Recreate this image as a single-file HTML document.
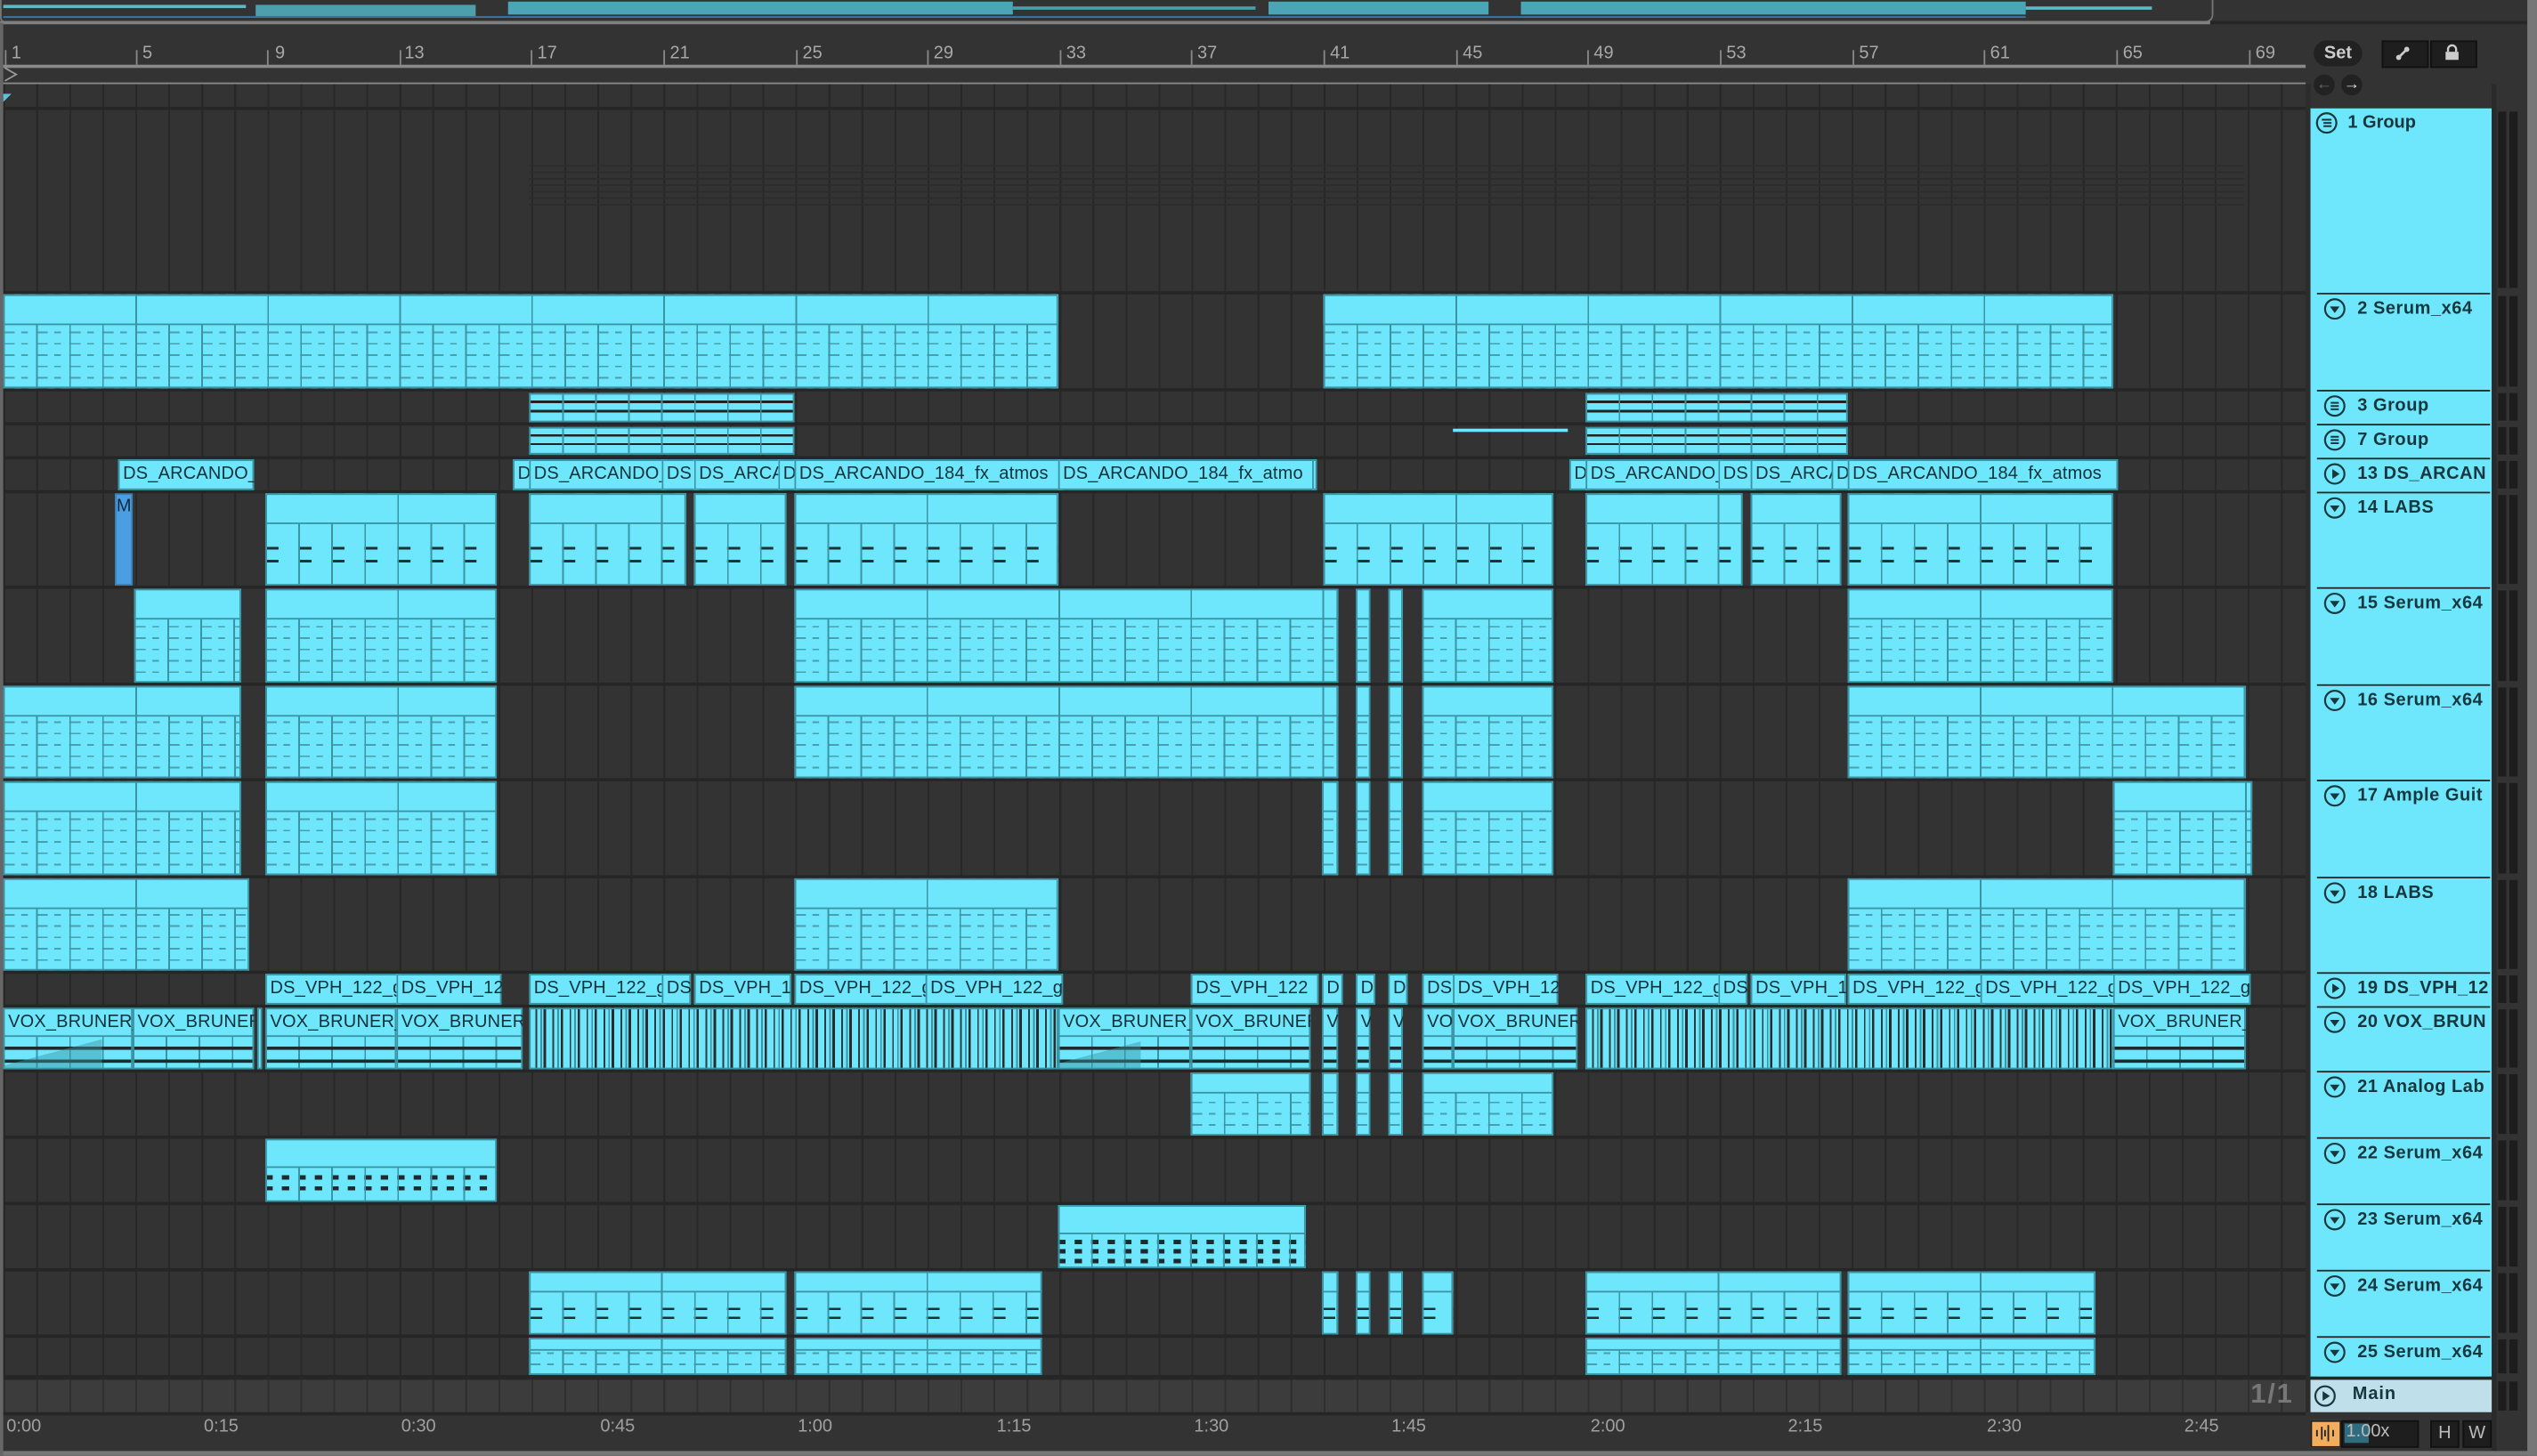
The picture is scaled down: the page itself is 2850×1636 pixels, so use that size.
<!DOCTYPE html>
<html><head><meta charset="utf-8">
<style>
html,body{margin:0;padding:0;background:#2b2b2b;width:2850px;height:1636px;overflow:hidden}
#w{position:absolute;left:0;top:0;width:1568px;height:900px;transform:scale(1.81760);transform-origin:0 0;background:#333;font-family:"Liberation Sans",sans-serif}
.abs{position:absolute}
#arr{position:absolute;left:0;top:52px;width:1425px;height:821px;background:
 repeating-linear-gradient(90deg,transparent 0 2px,#282828 2px 3.2px,transparent 3.2px 20.4px),#333}
.sep{position:absolute;left:0;width:1425px;height:2px;background:#262626}
.c{position:absolute;background-color:#6ee6fb;box-shadow:inset 0 0 0 1px #3a94a3;overflow:hidden}
.m{background:
 linear-gradient(#3a94a3,#3a94a3) 0 32%/100% 1px no-repeat,
 repeating-linear-gradient(90deg,#3a94a3 0 1px,transparent 1px 81.6px),
 linear-gradient(to bottom,#6ee6fb 0 32%,transparent 32%),
 repeating-linear-gradient(90deg,#3a94a3 0 1px,transparent 1px 20.4px),
 linear-gradient(90deg,transparent 0 35%,#6ee6fb 35% 55%,transparent 55% 75%,#6ee6fb 75%) 0 0/20.4px 100%,
 repeating-linear-gradient(0deg,transparent 0 6px,#4a9fae 6px 7px),
 #6ee6fb}
.m2{background:
 linear-gradient(#3a94a3,#3a94a3) 0 32%/100% 1px no-repeat,
 repeating-linear-gradient(90deg,#3a94a3 0 1px,transparent 1px 81.6px),
 linear-gradient(to bottom,#6ee6fb 0 32%,transparent 32%),
 repeating-linear-gradient(90deg,#3a94a3 0 1px,transparent 1px 20.4px),
 linear-gradient(90deg,transparent 0 40%,#6ee6fb 40%) 0 0/20.4px 100%,
 linear-gradient(to bottom,transparent 0 58%,#1e3236 58% 61%,transparent 61% 72%,#1e3236 72% 75%,transparent 75%),
 #6ee6fb}
.g{background:repeating-linear-gradient(90deg,#3a94a3 0 1px,transparent 1px 20.4px),
 linear-gradient(to bottom,transparent 0 26%,#222 26% 34%,transparent 34% 58%,#222 58% 66%,transparent 66%),#6ee6fb}
.a{background:
 linear-gradient(#3a94a3,#3a94a3) 0 17px/100% 1px no-repeat,
 linear-gradient(#1e2a2d,#1e2a2d) 0 24px/100% 2px no-repeat,
 linear-gradient(#1e2a2d,#1e2a2d) 0 32px/100% 2px no-repeat,
 repeating-linear-gradient(90deg,#3a94a3 0 1px,transparent 1px 20.4px) 0 18px/100% 100% no-repeat,
 #6ee6fb}
.st{background:
 repeating-linear-gradient(90deg,#6ee6fb 0 4px,#2f3b3e 4px 5px,#6ee6fb 5px 7px,#3a94a3 7px 8px,#6ee6fb 8px 9px,#2b2b2b 9px 10.5px),
 #6ee6fb}
.l{font-size:11px;line-height:19px;color:#10323a;padding-left:3px;white-space:nowrap;letter-spacing:.1px}
.r{position:absolute;color:#a8a8a8;font-size:11px;top:27px}
.tk{position:absolute;top:35px;width:1px;height:5px;background:#888}
.hd{position:absolute;left:1432px;width:107px;background:#6ee6fb;border-top:1px solid #262626;color:#17373e;font-weight:bold;font-size:11px}
.hd span{position:absolute;left:25px;top:3px;white-space:nowrap;letter-spacing:.3px}
.hd svg{position:absolute;left:4px;top:2px}
.mt{position:absolute;left:1544px;width:12px;background:
 linear-gradient(90deg,#1d1d1d 0 5px,transparent 5px 7px,#1d1d1d 7px 12px)}
.tl{position:absolute;top:876px;color:#a0a0a0;font-size:11px}
</style></head><body><div id="w">
<div class="abs" style="left:0;top:0;width:1366px;height:13px;background:#333;border:1px solid #777;border-top:0;border-radius:0 0 5px 3px"></div>
<div class="abs" style="left:2px;top:3px;width:150px;height:2px;background:#5fb8c8"></div>
<div class="abs" style="left:158px;top:3px;width:136px;height:7px;background:#4d9fad"></div>
<div class="abs" style="left:314px;top:1px;width:312px;height:8px;background:#4aa5b6"></div>
<div class="abs" style="left:626px;top:4px;width:150px;height:2px;background:#4d9fad"></div>
<div class="abs" style="left:784px;top:1px;width:136px;height:8px;background:#4aa5b6"></div>
<div class="abs" style="left:940px;top:1px;width:312px;height:8px;background:#4aa5b6"></div>
<div class="abs" style="left:1252px;top:4px;width:78px;height:2px;background:#5fb8c8"></div>
<div class="abs" style="left:2px;top:10px;width:1250px;height:1px;background:#3c78a8"></div>
<div class="abs" style="left:1366px;top:13px;width:202px;height:2px;background:#262626"></div>
<div class="abs" style="left:0;top:13px;width:1366px;height:2px;background:#808080"></div>
<div class="r" style="left:7px">1</div><div class="tk" style="left:3px;top:31px;height:9px"></div>
<div class="r" style="left:88px">5</div><div class="tk" style="left:84px;top:31px;height:9px"></div>
<div class="r" style="left:170px">9</div><div class="tk" style="left:165px;top:31px;height:9px"></div>
<div class="r" style="left:250px">13</div><div class="tk" style="left:247px;top:31px;height:9px"></div>
<div class="r" style="left:332px">17</div><div class="tk" style="left:328px;top:31px;height:9px"></div>
<div class="r" style="left:414px">21</div><div class="tk" style="left:410px;top:31px;height:9px"></div>
<div class="r" style="left:496px">25</div><div class="tk" style="left:492px;top:31px;height:9px"></div>
<div class="r" style="left:577px">29</div><div class="tk" style="left:573px;top:31px;height:9px"></div>
<div class="r" style="left:659px">33</div><div class="tk" style="left:655px;top:31px;height:9px"></div>
<div class="r" style="left:740px">37</div><div class="tk" style="left:736px;top:31px;height:9px"></div>
<div class="r" style="left:822px">41</div><div class="tk" style="left:818px;top:31px;height:9px"></div>
<div class="r" style="left:904px">45</div><div class="tk" style="left:900px;top:31px;height:9px"></div>
<div class="r" style="left:985px">49</div><div class="tk" style="left:981px;top:31px;height:9px"></div>
<div class="r" style="left:1067px">53</div><div class="tk" style="left:1063px;top:31px;height:9px"></div>
<div class="r" style="left:1149px">57</div><div class="tk" style="left:1145px;top:31px;height:9px"></div>
<div class="r" style="left:1230px">61</div><div class="tk" style="left:1226px;top:31px;height:9px"></div>
<div class="r" style="left:1312px">65</div><div class="tk" style="left:1308px;top:31px;height:9px"></div>
<div class="r" style="left:1394px">69</div><div class="tk" style="left:1390px;top:31px;height:9px"></div>
<div class="abs" style="left:0;top:40px;width:1425px;height:1.5px;background:#8a8a8a"></div>
<div class="abs" style="left:0;top:51px;width:1425px;height:1.5px;background:#8a8a8a"></div>
<svg class="abs" style="left:2px;top:41px" width="10" height="10"><path d="M1 1 L8 5 L1 9" fill="none" stroke="#999" stroke-width="1"/></svg>
<div class="abs" style="left:1430px;top:25px;width:30px;height:16px;border-radius:8px;background:#222;color:#ccc;font-size:11px;font-weight:bold;text-align:center;line-height:16px">Set</div>
<div class="abs" style="left:1472px;top:25px;width:27px;height:15px;background:#1e1e1e;border:1px solid #111"></div>
<svg class="abs" style="left:1480px;top:28px" width="10" height="10"><path d="M2 8 L8 2" stroke="#ccc" stroke-width="1.5"/><circle cx="2.5" cy="7.5" r="1.6" fill="#ccc"/><circle cx="7.5" cy="2.5" r="1.6" fill="#ccc"/></svg>
<div class="abs" style="left:1502px;top:25px;width:27px;height:15px;background:#1e1e1e;border:1px solid #111"></div>
<svg class="abs" style="left:1510px;top:27px" width="11" height="11"><path d="M3 5 V3.5 a2.5 2.5 0 0 1 5 0 V5" fill="none" stroke="#ccc" stroke-width="1.3"/><rect x="1.5" y="5" width="8" height="5" fill="#ccc"/></svg>
<div class="abs" style="left:1430px;top:46px;width:13px;height:13px;border-radius:50%;background:#222;color:#666;font-size:10px;text-align:center;line-height:13px">&#8592;</div>
<div class="abs" style="left:1447px;top:46px;width:13px;height:13px;border-radius:50%;background:#222;color:#ddd;font-size:10px;text-align:center;line-height:13px">&#8594;</div>
<div id="arr"></div>
<div class="abs" style="left:2px;top:58px;width:5px;height:5px;background:linear-gradient(135deg,#5fc0d8 50%,transparent 50%)"></div>
<div class="sep" style="top:66px"></div>
<div class="sep" style="top:180px"></div>
<div class="sep" style="top:240px"></div>
<div class="sep" style="top:261px"></div>
<div class="sep" style="top:282px"></div>
<div class="sep" style="top:303px"></div>
<div class="sep" style="top:362px"></div>
<div class="sep" style="top:422px"></div>
<div class="sep" style="top:481px"></div>
<div class="sep" style="top:541px"></div>
<div class="sep" style="top:600px"></div>
<div class="sep" style="top:621px"></div>
<div class="sep" style="top:661px"></div>
<div class="sep" style="top:702px"></div>
<div class="sep" style="top:743px"></div>
<div class="sep" style="top:784px"></div>
<div class="sep" style="top:825px"></div>
<div class="sep" style="top:850px;height:3px"></div>
<div class="abs" style="left:0;top:853px;width:1425px;height:20px;background:repeating-linear-gradient(90deg,transparent 0 2px,#2f2f2f 2px 3.2px,transparent 3.2px 20.4px),#3c3c3c"></div>
<div class="abs" style="left:0;top:873px;width:1425px;height:2px;background:#262626"></div>
<div class="abs" style="left:327px;top:100px;width:1060px;height:30px;background:repeating-linear-gradient(0deg,transparent 0 3px,#2c2c2c 3px 4px)"></div>
<div class="c m" style="left:2px;top:182px;width:652px;height:58px"></div>
<div class="c m" style="left:818px;top:182px;width:488px;height:58px"></div>
<div class="c g" style="left:327px;top:243px;width:164px;height:18px"></div>
<div class="c g" style="left:980px;top:243px;width:162px;height:18px"></div>
<div class="c g" style="left:327px;top:264px;width:164px;height:17px"></div>
<div class="c g" style="left:980px;top:264px;width:162px;height:17px"></div>
<div class="abs" style="left:898px;top:265px;width:71px;height:2px;background:#6ee6fb"></div>
<div class="c l" style="left:73px;top:284px;width:81px;height:19px">DS_ARCANDO_</div>
<div class="c l" style="left:317px;top:284px;width:10px;height:19px">D</div>
<div class="c l" style="left:327px;top:284px;width:82px;height:19px">DS_ARCANDO_</div>
<div class="c l" style="left:409px;top:284px;width:20px;height:19px">DS</div>
<div class="c l" style="left:429px;top:284px;width:52px;height:19px">DS_ARCA</div>
<div class="c l" style="left:481px;top:284px;width:10px;height:19px">D</div>
<div class="c l" style="left:491px;top:284px;width:163px;height:19px">DS_ARCANDO_184_fx_atmos</div>
<div class="c l" style="left:654px;top:284px;width:156px;height:19px">DS_ARCANDO_184_fx_atmo</div>
<div class="c" style="left:811px;top:284px;width:3px;height:19px"></div>
<div class="c l" style="left:970px;top:284px;width:10px;height:19px">D</div>
<div class="c l" style="left:980px;top:284px;width:82px;height:19px">DS_ARCANDO_</div>
<div class="c l" style="left:1062px;top:284px;width:20px;height:19px">DS</div>
<div class="c l" style="left:1082px;top:284px;width:50px;height:19px">DS_ARCA</div>
<div class="c l" style="left:1132px;top:284px;width:10px;height:19px">D</div>
<div class="c l" style="left:1142px;top:284px;width:164px;height:19px">DS_ARCANDO_184_fx_atmos</div>
<div class="c" style="left:71px;top:305px;width:11px;height:57px;background:#4a9fe3;box-shadow:inset 0 0 0 1px #3b7fb5"><div class="l" style="padding-left:1px;line-height:17px;color:#0e2a40">M</div></div>
<div class="c m2" style="left:164px;top:305px;width:143px;height:57px"></div>
<div class="c m2" style="left:327px;top:305px;width:97px;height:57px"></div>
<div class="c m2" style="left:429px;top:305px;width:57px;height:57px"></div>
<div class="c m2" style="left:491px;top:305px;width:163px;height:57px"></div>
<div class="c m2" style="left:818px;top:305px;width:142px;height:57px"></div>
<div class="c m2" style="left:980px;top:305px;width:97px;height:57px"></div>
<div class="c m2" style="left:1082px;top:305px;width:56px;height:57px"></div>
<div class="c m2" style="left:1142px;top:305px;width:164px;height:57px"></div>
<div class="c m" style="left:83px;top:364px;width:66px;height:58px"></div>
<div class="c m" style="left:164px;top:364px;width:143px;height:58px"></div>
<div class="c m" style="left:491px;top:364px;width:336px;height:58px"></div>
<div class="c m" style="left:838px;top:364px;width:9px;height:58px"></div>
<div class="c m" style="left:858px;top:364px;width:9px;height:58px"></div>
<div class="c m" style="left:879px;top:364px;width:81px;height:58px"></div>
<div class="c m" style="left:1142px;top:364px;width:164px;height:58px"></div>
<div class="c m" style="left:2px;top:424px;width:147px;height:57px"></div>
<div class="c m" style="left:164px;top:424px;width:143px;height:57px"></div>
<div class="c m" style="left:491px;top:424px;width:336px;height:57px"></div>
<div class="c m" style="left:838px;top:424px;width:9px;height:57px"></div>
<div class="c m" style="left:858px;top:424px;width:9px;height:57px"></div>
<div class="c m" style="left:879px;top:424px;width:81px;height:57px"></div>
<div class="c m" style="left:1142px;top:424px;width:246px;height:57px"></div>
<div class="c m" style="left:2px;top:483px;width:147px;height:58px"></div>
<div class="c m" style="left:164px;top:483px;width:143px;height:58px"></div>
<div class="c m" style="left:817px;top:483px;width:10px;height:58px"></div>
<div class="c m" style="left:838px;top:483px;width:9px;height:58px"></div>
<div class="c m" style="left:858px;top:483px;width:9px;height:58px"></div>
<div class="c m" style="left:879px;top:483px;width:81px;height:58px"></div>
<div class="c m" style="left:1306px;top:483px;width:86px;height:58px"></div>
<div class="c m" style="left:2px;top:543px;width:152px;height:57px"></div>
<div class="c m" style="left:491px;top:543px;width:163px;height:57px"></div>
<div class="c m" style="left:1142px;top:543px;width:246px;height:57px"></div>
<div class="c l" style="left:164px;top:602px;width:81px;height:19px">DS_VPH_122_g</div>
<div class="c l" style="left:245px;top:602px;width:62px;height:19px">DS_VPH_122</div>
<div class="c l" style="left:327px;top:602px;width:82px;height:19px">DS_VPH_122_g</div>
<div class="c l" style="left:409px;top:602px;width:15px;height:19px">DS</div>
<div class="c l" style="left:429px;top:602px;width:57px;height:19px">DS_VPH_1</div>
<div class="c l" style="left:491px;top:602px;width:81px;height:19px">DS_VPH_122_g</div>
<div class="c l" style="left:572px;top:602px;width:82px;height:19px">DS_VPH_122_g</div>
<div class="c l" style="left:736px;top:602px;width:76px;height:19px">DS_VPH_122</div>
<div class="c l" style="left:817px;top:602px;width:10px;height:19px">D</div>
<div class="c l" style="left:838px;top:602px;width:9px;height:19px">D</div>
<div class="c l" style="left:858px;top:602px;width:9px;height:19px">D</div>
<div class="c l" style="left:879px;top:602px;width:19px;height:19px">DS</div>
<div class="c l" style="left:898px;top:602px;width:62px;height:19px">DS_VPH_122</div>
<div class="c l" style="left:980px;top:602px;width:82px;height:19px">DS_VPH_122_g</div>
<div class="c l" style="left:1062px;top:602px;width:15px;height:19px">DS</div>
<div class="c l" style="left:1082px;top:602px;width:56px;height:19px">DS_VPH_1</div>
<div class="c l" style="left:1142px;top:602px;width:82px;height:19px">DS_VPH_122_g</div>
<div class="c l" style="left:1224px;top:602px;width:82px;height:19px">DS_VPH_122_g</div>
<div class="c l" style="left:1306px;top:602px;width:82px;height:19px">DS_VPH_122_g</div>
<div class="c a" style="left:2px;top:623px;width:80px;height:38px"><div class="l">VOX_BRUNER_</div></div>
<div class="abs" style="left:3px;top:641px;width:60px;height:19px;background:linear-gradient(165deg,transparent 50%,rgba(58,148,163,.45) 50%)"></div>
<div class="c a" style="left:82px;top:623px;width:75px;height:38px"><div class="l">VOX_BRUNER</div></div>
<div class="c" style="left:159px;top:623px;width:3px;height:38px"></div>
<div class="c a" style="left:164px;top:623px;width:81px;height:38px"><div class="l">VOX_BRUNER_</div></div>
<div class="c a" style="left:245px;top:623px;width:78px;height:38px"><div class="l">VOX_BRUNER</div></div>
<div class="c st" style="left:327px;top:623px;width:327px;height:38px"></div>
<div class="c a" style="left:654px;top:623px;width:82px;height:38px"><div class="l">VOX_BRUNER_</div></div>
<div class="abs" style="left:655px;top:641px;width:50px;height:19px;background:linear-gradient(165deg,transparent 50%,rgba(58,148,163,.45) 50%)"></div>
<div class="c a" style="left:736px;top:623px;width:74px;height:38px"><div class="l">VOX_BRUNER</div></div>
<div class="c a" style="left:817px;top:623px;width:10px;height:38px"><div class="l">V</div></div>
<div class="c a" style="left:838px;top:623px;width:9px;height:38px"><div class="l">V</div></div>
<div class="c a" style="left:858px;top:623px;width:9px;height:38px"><div class="l">V</div></div>
<div class="c a" style="left:879px;top:623px;width:19px;height:38px"><div class="l">VO</div></div>
<div class="c a" style="left:898px;top:623px;width:77px;height:38px"><div class="l">VOX_BRUNER_</div></div>
<div class="c st" style="left:980px;top:623px;width:326px;height:38px"></div>
<div class="c a" style="left:1306px;top:623px;width:82px;height:38px"><div class="l">VOX_BRUNER_</div></div>
<div class="c m" style="left:736px;top:663px;width:74px;height:39px"></div>
<div class="c m" style="left:817px;top:663px;width:10px;height:39px"></div>
<div class="c m" style="left:838px;top:663px;width:9px;height:39px"></div>
<div class="c m" style="left:858px;top:663px;width:9px;height:39px"></div>
<div class="c m" style="left:879px;top:663px;width:81px;height:39px"></div>
<div class="c" style="left:164px;top:704px;width:143px;height:39px;background:
 linear-gradient(#3a94a3,#3a94a3) 0 45%/100% 1px no-repeat,
 linear-gradient(to bottom,#6ee6fb 0 45%,transparent 45%),
 repeating-linear-gradient(90deg,#3a94a3 0 1px,transparent 1px 20.4px),
 linear-gradient(90deg,transparent 0 45%,#6ee6fb 45%) 0 0/10.2px 100%,
 linear-gradient(to bottom,transparent 0 58%,#1e2a2d 58% 65%,transparent 65% 75%,#1e2a2d 75% 82%,transparent 82%),#6ee6fb"></div>
<div class="c" style="left:654px;top:745px;width:153px;height:39px;background:
 linear-gradient(#3a94a3,#3a94a3) 0 45%/100% 1px no-repeat,
 linear-gradient(to bottom,#6ee6fb 0 45%,transparent 45%),
 repeating-linear-gradient(90deg,#3a94a3 0 1px,transparent 1px 20.4px),
 linear-gradient(90deg,transparent 0 45%,#6ee6fb 45%) 0 0/10.2px 100%,
 linear-gradient(to bottom,transparent 0 55%,#1e2a2d 55% 62%,transparent 62% 70%,#1e2a2d 70% 77%,transparent 77% 85%,#1e2a2d 85% 92%,transparent 92%),#6ee6fb"></div>
<div class="c m2" style="left:327px;top:786px;width:159px;height:39px"></div>
<div class="c m2" style="left:491px;top:786px;width:153px;height:39px"></div>
<div class="c m2" style="left:817px;top:786px;width:10px;height:39px"></div>
<div class="c m2" style="left:838px;top:786px;width:9px;height:39px"></div>
<div class="c m2" style="left:858px;top:786px;width:9px;height:39px"></div>
<div class="c m2" style="left:879px;top:786px;width:19px;height:39px"></div>
<div class="c m2" style="left:980px;top:786px;width:158px;height:39px"></div>
<div class="c m2" style="left:1142px;top:786px;width:153px;height:39px"></div>
<div class="c m" style="left:327px;top:827px;width:159px;height:23px"></div>
<div class="c m" style="left:491px;top:827px;width:153px;height:23px"></div>
<div class="c m" style="left:980px;top:827px;width:158px;height:23px"></div>
<div class="c m" style="left:1142px;top:827px;width:153px;height:23px"></div>
<div class="abs" style="left:1391px;top:852px;color:#777;font-size:17px;font-weight:bold;letter-spacing:1px">1/1</div>
<div class="abs" style="left:0;top:875px;width:1425px;height:25px;background:#333"></div>
<div class="tl" style="left:4px">0:00</div>
<div class="tl" style="left:126px">0:15</div>
<div class="tl" style="left:248px">0:30</div>
<div class="tl" style="left:371px">0:45</div>
<div class="tl" style="left:493px">1:00</div>
<div class="tl" style="left:616px">1:15</div>
<div class="tl" style="left:738px">1:30</div>
<div class="tl" style="left:860px">1:45</div>
<div class="tl" style="left:983px">2:00</div>
<div class="tl" style="left:1105px">2:15</div>
<div class="tl" style="left:1228px">2:30</div>
<div class="tl" style="left:1350px">2:45</div>
<div class="abs" style="left:1425px;top:52px;width:3px;height:821px;background:#2c2c2c"></div>
<div class="abs" style="left:1428px;top:67px;width:112px;height:784px;background:#6ee6fb"></div>
<div class="abs" style="left:1540px;top:52px;width:3px;height:848px;background:#2a2a2a"></div>
<div class="abs" style="left:1562px;top:0;width:6px;height:900px;background:#777"></div>
<div class="abs" style="left:1428px;top:67px;width:112px;height:113px;color:#17373e;font-weight:bold;font-size:11px">
<svg class="abs" style="left:3px;top:2px" width="14" height="14"><circle cx="7" cy="7" r="6" fill="none" stroke="#17373e" stroke-width="1.2"/><path d="M4 5h6M5 7h5M5 9h5" stroke="#17373e" stroke-width="1.1"/></svg>
<span class="abs" style="left:23px;top:3px">1 Group</span></div>
<div class="hd" style="top:181px;height:59px"><svg width="14" height="14"><circle cx="7" cy="7" r="6" fill="none" stroke="#17373e" stroke-width="1.2"/><path d="M4 5.5h6l-3 4z" fill="#17373e"/></svg><span>2 Serum_x64</span></div>
<div class="hd" style="top:241px;height:20px"><svg width="14" height="14"><circle cx="7" cy="7" r="6" fill="none" stroke="#17373e" stroke-width="1.2"/><path d="M4.5 5h5M4.5 7h5M4.5 9h5" stroke="#17373e" stroke-width="1.1"/></svg><span>3 Group</span></div>
<div class="hd" style="top:262px;height:20px"><svg width="14" height="14"><circle cx="7" cy="7" r="6" fill="none" stroke="#17373e" stroke-width="1.2"/><path d="M4.5 5h5M4.5 7h5M4.5 9h5" stroke="#17373e" stroke-width="1.1"/></svg><span>7 Group</span></div>
<div class="hd" style="top:283px;height:20px"><svg width="14" height="14"><circle cx="7" cy="7" r="6" fill="none" stroke="#17373e" stroke-width="1.2"/><path d="M5.5 4v6l4.5-3z" fill="#17373e"/></svg><span>13 DS_ARCAN</span></div>
<div class="hd" style="top:304px;height:58px"><svg width="14" height="14"><circle cx="7" cy="7" r="6" fill="none" stroke="#17373e" stroke-width="1.2"/><path d="M4 5.5h6l-3 4z" fill="#17373e"/></svg><span>14 LABS</span></div>
<div class="hd" style="top:363px;height:59px"><svg width="14" height="14"><circle cx="7" cy="7" r="6" fill="none" stroke="#17373e" stroke-width="1.2"/><path d="M4 5.5h6l-3 4z" fill="#17373e"/></svg><span>15 Serum_x64</span></div>
<div class="hd" style="top:423px;height:58px"><svg width="14" height="14"><circle cx="7" cy="7" r="6" fill="none" stroke="#17373e" stroke-width="1.2"/><path d="M4 5.5h6l-3 4z" fill="#17373e"/></svg><span>16 Serum_x64</span></div>
<div class="hd" style="top:482px;height:59px"><svg width="14" height="14"><circle cx="7" cy="7" r="6" fill="none" stroke="#17373e" stroke-width="1.2"/><path d="M4 5.5h6l-3 4z" fill="#17373e"/></svg><span>17 Ample Guit</span></div>
<div class="hd" style="top:542px;height:58px"><svg width="14" height="14"><circle cx="7" cy="7" r="6" fill="none" stroke="#17373e" stroke-width="1.2"/><path d="M4 5.5h6l-3 4z" fill="#17373e"/></svg><span>18 LABS</span></div>
<div class="hd" style="top:601px;height:20px"><svg width="14" height="14"><circle cx="7" cy="7" r="6" fill="none" stroke="#17373e" stroke-width="1.2"/><path d="M5.5 4v6l4.5-3z" fill="#17373e"/></svg><span>19 DS_VPH_12</span></div>
<div class="hd" style="top:622px;height:39px"><svg width="14" height="14"><circle cx="7" cy="7" r="6" fill="none" stroke="#17373e" stroke-width="1.2"/><path d="M4 5.5h6l-3 4z" fill="#17373e"/></svg><span>20 VOX_BRUN</span></div>
<div class="hd" style="top:662px;height:40px"><svg width="14" height="14"><circle cx="7" cy="7" r="6" fill="none" stroke="#17373e" stroke-width="1.2"/><path d="M4 5.5h6l-3 4z" fill="#17373e"/></svg><span>21 Analog Lab</span></div>
<div class="hd" style="top:703px;height:40px"><svg width="14" height="14"><circle cx="7" cy="7" r="6" fill="none" stroke="#17373e" stroke-width="1.2"/><path d="M4 5.5h6l-3 4z" fill="#17373e"/></svg><span>22 Serum_x64</span></div>
<div class="hd" style="top:744px;height:40px"><svg width="14" height="14"><circle cx="7" cy="7" r="6" fill="none" stroke="#17373e" stroke-width="1.2"/><path d="M4 5.5h6l-3 4z" fill="#17373e"/></svg><span>23 Serum_x64</span></div>
<div class="hd" style="top:785px;height:40px"><svg width="14" height="14"><circle cx="7" cy="7" r="6" fill="none" stroke="#17373e" stroke-width="1.2"/><path d="M4 5.5h6l-3 4z" fill="#17373e"/></svg><span>24 Serum_x64</span></div>
<div class="hd" style="top:826px;height:24px"><svg width="14" height="14"><circle cx="7" cy="7" r="6" fill="none" stroke="#17373e" stroke-width="1.2"/><path d="M4 5.5h6l-3 4z" fill="#17373e"/></svg><span>25 Serum_x64</span></div>
<div class="abs" style="left:1428px;top:851px;width:112px;height:2px;background:#262626"></div>
<div class="abs" style="left:1428px;top:853px;width:112px;height:20px;background:#bfe0ea;color:#17373e;font-size:11px;font-weight:bold">
<svg class="abs" style="left:2px;top:3px" width="14" height="14"><circle cx="7" cy="7" r="6" fill="none" stroke="#17373e" stroke-width="1.2"/><path d="M5.5 4v6l4.5-3z" fill="#17373e"/></svg>
<span class="abs" style="left:26px;top:3px;letter-spacing:.5px">Main</span></div>
<div class="mt" style="top:69px;height:109px"></div>
<div class="mt" style="top:183px;height:56px"></div>
<div class="mt" style="top:243px;height:17px"></div>
<div class="mt" style="top:264px;height:17px"></div>
<div class="mt" style="top:285px;height:17px"></div>
<div class="mt" style="top:306px;height:55px"></div>
<div class="mt" style="top:365px;height:56px"></div>
<div class="mt" style="top:425px;height:55px"></div>
<div class="mt" style="top:484px;height:56px"></div>
<div class="mt" style="top:544px;height:55px"></div>
<div class="mt" style="top:603px;height:17px"></div>
<div class="mt" style="top:624px;height:36px"></div>
<div class="mt" style="top:664px;height:37px"></div>
<div class="mt" style="top:705px;height:37px"></div>
<div class="mt" style="top:746px;height:37px"></div>
<div class="mt" style="top:787px;height:37px"></div>
<div class="mt" style="top:828px;height:21px"></div>
<div class="mt" style="top:854px;height:18px"></div>
<div class="abs" style="left:1428px;top:878px;width:17px;height:15px;background:#f2ae5c;border:1px solid #222"></div>
<svg class="abs" style="left:1430px;top:880px" width="14" height="12"><path d="M2 4v4M5 2v8M7 4v4M9 1v10M12 4v4" stroke="#222" stroke-width="1"/></svg>
<div class="abs" style="left:1447px;top:878px;width:46px;height:15px;background:#1e1e1e;border:1px solid #111"></div>
<div class="abs" style="left:1449px;top:880px;width:15px;height:12px;background:#2f6c80"></div>
<div class="abs" style="left:1450px;top:879px;color:#bbb;font-size:11px">1.00x</div>
<div class="abs" style="left:1502px;top:878px;width:16px;height:15px;background:#1e1e1e;border:1px solid #111;color:#bbb;font-size:11px;text-align:center;line-height:15px">H</div>
<div class="abs" style="left:1522px;top:878px;width:16px;height:15px;background:#1e1e1e;border:1px solid #111;color:#bbb;font-size:11px;text-align:center;line-height:15px">W</div>
<div class="abs" style="left:0;top:897px;width:1568px;height:3px;background:#777"></div>
<div class="abs" style="left:0;top:14px;width:2px;height:886px;background:#666"></div>
</div></body></html>
